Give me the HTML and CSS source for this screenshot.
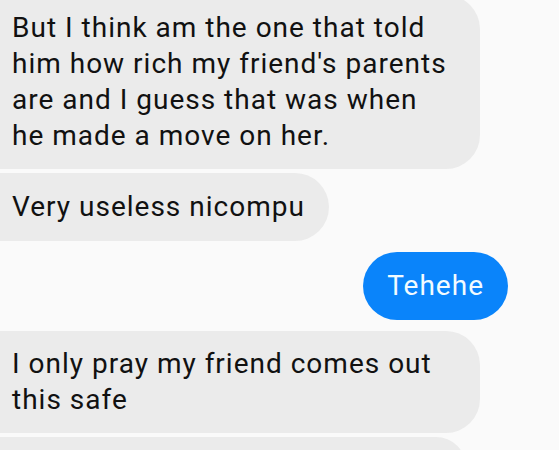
FILE: index.html
```html
<!DOCTYPE html>
<html>
<head>
<meta charset="utf-8">
<link rel="stylesheet" href="styles.css">
</head>
<body>
<div class="thread">
  <div class="msg in multi first">But I think am the one that told<br>him how rich my friend's parents<br>are and I guess that was when<br>he made a move on her.</div>
  <div class="msg in single">Very useless nicompu</div>
  <div class="msg out single group">Tehehe</div>
  <div class="msg in multi group">I only pray my friend comes out<br>this safe</div>
  <div class="msg in stub"></div>
</div>
</body>
</html>
```

FILE: styles.css
```css
html, body {
  margin: 0;
  padding: 0;
  background: #fafafa;
  height: 100%;
  overflow: hidden;
}

.thread {
  display: flex;
  flex-direction: column;
  gap: 4px;
  font-family: Roboto, "Noto Sans", sans-serif;
  font-size: 28px;
  letter-spacing: 1px;
  line-height: 36px;
  color: #111111;
}

.msg {
  box-sizing: border-box;
  padding: 16px 24px;
  border-radius: 34px;
  white-space: nowrap;
}

.in {
  align-self: flex-start;
  margin-left: -12px;
  background: #ebebeb;
  border-radius: 6px 34px 34px 6px;
}

.out {
  align-self: flex-end;
  margin-right: 51px;
  background: #0a84fa;
  color: #f2fbff;
  border-radius: 34px;
}

.multi {
  width: 492px;
  padding-top: 15px;
  padding-bottom: 15px;
}

.first {
  margin-top: -5px;
}

.group {
  margin-top: 7px;
}

.stub {
  width: 478px;
  height: 60px;
}
```
